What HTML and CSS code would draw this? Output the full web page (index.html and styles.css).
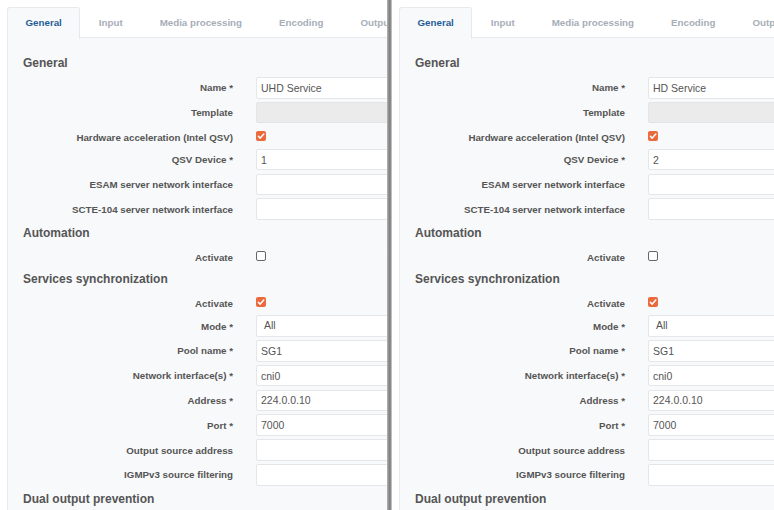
FILE: index.html
```html
<!DOCTYPE html>
<html lang="en">
<head>
    <meta charset="UTF-8">
    <meta name="viewport" content="width=device-width, initial-scale=1.0">
    <title>Services</title>
    <link rel="stylesheet" href="styles.css">
</head>
<body>
    <div class="screen">
        <!-- UHD service -->
        <section class="pane pane-left">
            <div class="card">
                <div class="tabs">
                    <span class="tab active">General</span>
                    <span class="tab">Input</span>
                    <span class="tab">Media processing</span>
                    <span class="tab">Encoding</span>
                    <span class="tab">Output</span>
                </div>
                <div class="card-body">
                    <h3 class="section-title">General</h3>
                    <div class="row">
                        <label>Name *</label>
                        <input class="field" type="text" value="UHD Service">
                    </div>
                    <div class="row">
                        <label>Template</label>
                        <input class="field" type="text" disabled>
                    </div>
                    <div class="row check-row">
                        <label>Hardware acceleration (Intel QSV)</label>
                        <span class="check checked"><svg viewBox="0 0 10 10"><path d="M2.3 5.2l1.9 1.9 3.6-4" /></svg></span>
                    </div>
                    <div class="row">
                        <label>QSV Device *</label>
                        <input class="field" type="text" value="1">
                    </div>
                    <div class="row">
                        <label>ESAM server network interface</label>
                        <input class="field" type="text">
                    </div>
                    <div class="row">
                        <label>SCTE-104 server network interface</label>
                        <input class="field" type="text">
                    </div>

                    <h3 class="section-title">Automation</h3>
                    <div class="row check-row">
                        <label>Activate</label>
                        <span class="check"></span>
                    </div>

                    <h3 class="section-title">Services synchronization</h3>
                    <div class="row check-row">
                        <label>Activate</label>
                        <span class="check checked"><svg viewBox="0 0 10 10"><path d="M2.3 5.2l1.9 1.9 3.6-4" /></svg></span>
                    </div>
                    <div class="row">
                        <label>Mode *</label>
                        <div class="field select">All</div>
                    </div>
                    <div class="row">
                        <label>Pool name *</label>
                        <input class="field" type="text" value="SG1">
                    </div>
                    <div class="row">
                        <label>Network interface(s) *</label>
                        <input class="field" type="text" value="cni0">
                    </div>
                    <div class="row">
                        <label>Address *</label>
                        <input class="field" type="text" value="224.0.0.10">
                    </div>
                    <div class="row">
                        <label>Port *</label>
                        <input class="field" type="text" value="7000">
                    </div>
                    <div class="row">
                        <label>Output source address</label>
                        <input class="field" type="text">
                    </div>
                    <div class="row">
                        <label>IGMPv3 source filtering</label>
                        <input class="field" type="text">
                    </div>

                    <h3 class="section-title">Dual output prevention</h3>
                </div>
            </div>
        </section>

        <div class="divider"></div>

        <!-- HD service -->
        <section class="pane pane-right">
            <div class="card">
                <div class="tabs">
                    <span class="tab active">General</span>
                    <span class="tab">Input</span>
                    <span class="tab">Media processing</span>
                    <span class="tab">Encoding</span>
                    <span class="tab">Output</span>
                </div>
                <div class="card-body">
                    <h3 class="section-title">General</h3>
                    <div class="row">
                        <label>Name *</label>
                        <input class="field" type="text" value="HD Service">
                    </div>
                    <div class="row">
                        <label>Template</label>
                        <input class="field" type="text" disabled>
                    </div>
                    <div class="row check-row">
                        <label>Hardware acceleration (Intel QSV)</label>
                        <span class="check checked"><svg viewBox="0 0 10 10"><path d="M2.3 5.2l1.9 1.9 3.6-4" /></svg></span>
                    </div>
                    <div class="row">
                        <label>QSV Device *</label>
                        <input class="field" type="text" value="2">
                    </div>
                    <div class="row">
                        <label>ESAM server network interface</label>
                        <input class="field" type="text">
                    </div>
                    <div class="row">
                        <label>SCTE-104 server network interface</label>
                        <input class="field" type="text">
                    </div>

                    <h3 class="section-title">Automation</h3>
                    <div class="row check-row">
                        <label>Activate</label>
                        <span class="check"></span>
                    </div>

                    <h3 class="section-title">Services synchronization</h3>
                    <div class="row check-row">
                        <label>Activate</label>
                        <span class="check checked"><svg viewBox="0 0 10 10"><path d="M2.3 5.2l1.9 1.9 3.6-4" /></svg></span>
                    </div>
                    <div class="row">
                        <label>Mode *</label>
                        <div class="field select">All</div>
                    </div>
                    <div class="row">
                        <label>Pool name *</label>
                        <input class="field" type="text" value="SG1">
                    </div>
                    <div class="row">
                        <label>Network interface(s) *</label>
                        <input class="field" type="text" value="cni0">
                    </div>
                    <div class="row">
                        <label>Address *</label>
                        <input class="field" type="text" value="224.0.0.10">
                    </div>
                    <div class="row">
                        <label>Port *</label>
                        <input class="field" type="text" value="7000">
                    </div>
                    <div class="row">
                        <label>Output source address</label>
                        <input class="field" type="text">
                    </div>
                    <div class="row">
                        <label>IGMPv3 source filtering</label>
                        <input class="field" type="text">
                    </div>

                    <h3 class="section-title">Dual output prevention</h3>
                </div>
            </div>
        </section>
    </div>
</body>
</html>
```

FILE: styles.css
```css
body {
    margin: 0;
    padding: 0;
    background: #fff;
    font-family: "Liberation Sans", Arial, sans-serif;
    color: #555;
    overflow: hidden;
}
.screen {
    display: flex;
    height: 510px;
    overflow: hidden;
}
.pane {
    overflow: hidden;
    background: #fff;
}
.pane-left {
    flex: none;
    width: 380px;
    padding-left: 7px;
}
.pane-right {
    flex: 1;
    padding-left: 7px;
}
.divider {
    flex: none;
    width: 5px;
    background: linear-gradient(to right, #b9b9b9, #7f7f7f 45%, #8c8c8c 70%, #d6d6d6);
}
.card {
    width: 560px;
}

/* tab strip */
.tabs {
    display: flex;
    height: 30px;
    padding-top: 7px;
    border-bottom: 1px solid #e7e9ec;
}
.tab {
    height: 30px;
    line-height: 30px;
    padding: 0 17.5px;
    border: 1px solid transparent;
    border-bottom: none;
    font-size: 9.75px;
    font-weight: bold;
    color: #a7aeb8;
    white-space: nowrap;
}
.tab.active {
    background: #f8f9fa;
    border-color: #e7e9ec;
    border-radius: 3px 3px 0 0;
    color: #1f5d98;
    height: 31px;
    margin-bottom: -1px;
}

.card-body {
    background: #f8f9fa;
    border-left: 1px solid #e7e9ec;
    padding-top: 12px;
    height: 500px;
}
/* top margin collapses with the gap under the previous row */
.section-title {
    margin: 6px 0 7px;
    padding-left: 15px;
    font-size: 12px;
    line-height: 14px;
    font-weight: bold;
    color: #555;
}

/* form rows */
.row {
    display: flex;
    align-items: center;
    gap: 23px;
    height: 21.5px;
    margin-bottom: 3.3px;
}
.row label {
    flex: none;
    width: 225px;
    text-align: right;
    font-size: 9.75px;
    font-weight: bold;
    color: #555;
    white-space: nowrap;
}
.check-row {
    align-items: flex-start;
    height: 19px;
}
.check-row label {
    line-height: 22px;
}
.field {
    box-sizing: border-box;
    flex: none;
    width: 260px;
    height: 21.5px;
    margin: 0;
    padding: 0 4px;
    border: 1px solid #e4e6e9;
    border-radius: 2px;
    background: #fff;
    font-family: "Liberation Sans", Arial, sans-serif;
    font-size: 10.5px;
    color: #555;
    outline: none;
}
.field:disabled {
    background: #ebebeb;
    border-color: #e4e4e4;
}
.select {
    padding-left: 7px;
    line-height: 19.5px;
}
.check {
    box-sizing: border-box;
    display: block;
    width: 10px;
    height: 10px;
    margin-top: 4px;
    border: 1.3px solid #666;
    border-radius: 2px;
    background: #fff;
}
.check.checked {
    border: none;
    background: #ea6a3c;
}
.check svg {
    display: block;
    width: 10px;
    height: 10px;
}
.check path {
    fill: none;
    stroke: #fff;
    stroke-width: 1.5;
    stroke-linecap: round;
    stroke-linejoin: round;
}
```
